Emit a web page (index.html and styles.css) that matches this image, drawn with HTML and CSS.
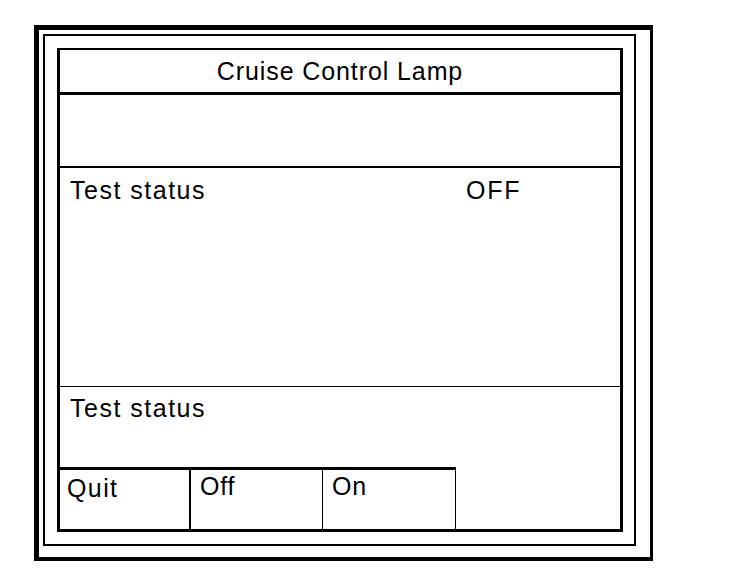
FILE: index.html
```html
<!DOCTYPE html>
<html>
<head>
<meta charset="utf-8">
<title>Cruise Control Lamp</title>
<link rel="stylesheet" href="styles.css">
</head>
<body>
<div class="outer">
  <div class="frame">
    <div class="panel">
      <div class="title">Cruise Control Lamp</div>
      <div class="blank"></div>
      <div class="status">
        <span class="label">Test status</span>
        <span class="value">OFF</span>
      </div>
      <div class="message">
        <span class="label">Test status</span>
      </div>
      <div class="buttons">
        <div class="btn btn-quit">Quit</div>
        <div class="btn btn-off">Off</div>
        <div class="btn btn-on">On</div>
      </div>
    </div>
  </div>
</div>
</body>
</html>
```
FILE: styles.css
```css
html, body {
  margin: 0;
  padding: 0;
  background: #ffffff;
}
body {
  font-family: "Liberation Sans", Arial, sans-serif;
  font-size: 25px;
  letter-spacing: 0.8px;
  color: #000000;
}
.outer {
  box-sizing: border-box;
  margin: 25px 0 0 34px;
  width: 619px;
  height: 536px;
  border-style: solid;
  border-color: #000;
  border-width: 5px 3px 4px 5px;
  padding: 4px 0 0 4px;
}
.frame {
  box-sizing: border-box;
  width: 593px;
  height: 512px;
  border: 2px solid #000;
  padding: 12px 0 0 12px;
}
.panel {
  box-sizing: border-box;
  width: 566px;
  height: 484px;
  border-style: solid;
  border-color: #000;
  border-width: 2px 3px 3px 3px;
  display: flex;
  flex-direction: column;
}
.title {
  height: 42px;
  line-height: 42px;
  text-align: center;
  border-bottom: 3px solid #000;
  flex: none;
  letter-spacing: 0.9px;
}
.blank {
  height: 71px;
  border-bottom: 2px solid #000;
  flex: none;
}
.status {
  height: 219px;
  border-bottom: 1px solid #000;
  flex: none;
  box-sizing: border-box;
  padding: 8px 0 0 10px;
  line-height: 28px;
  display: grid;
  grid-template-columns: 396px auto;
  align-items: start;
}
.label {
  letter-spacing: 1.5px;
}
.value {
  letter-spacing: 1.8px;
}
.message {
  height: 80px;
  flex: none;
  box-sizing: border-box;
  padding: 7px 0 0 10px;
  line-height: 28px;
}
.buttons {
  flex: 1;
  display: flex;
}
.btn {
  box-sizing: border-box;
  border-top: 3px solid #000;
  line-height: 28px;
  padding-top: 4px;
}
.btn-quit {
  width: 131px;
  border-right: 2px solid #000;
  padding-left: 7px;
  letter-spacing: 1.4px;
}
.btn-off {
  width: 132px;
  border-right: 1px solid #000;
  padding-left: 9px;
  padding-top: 2px;
}
.btn-on {
  width: 133px;
  border-right: 1px solid #000;
  padding-left: 9px;
  padding-top: 2px;
}
```
